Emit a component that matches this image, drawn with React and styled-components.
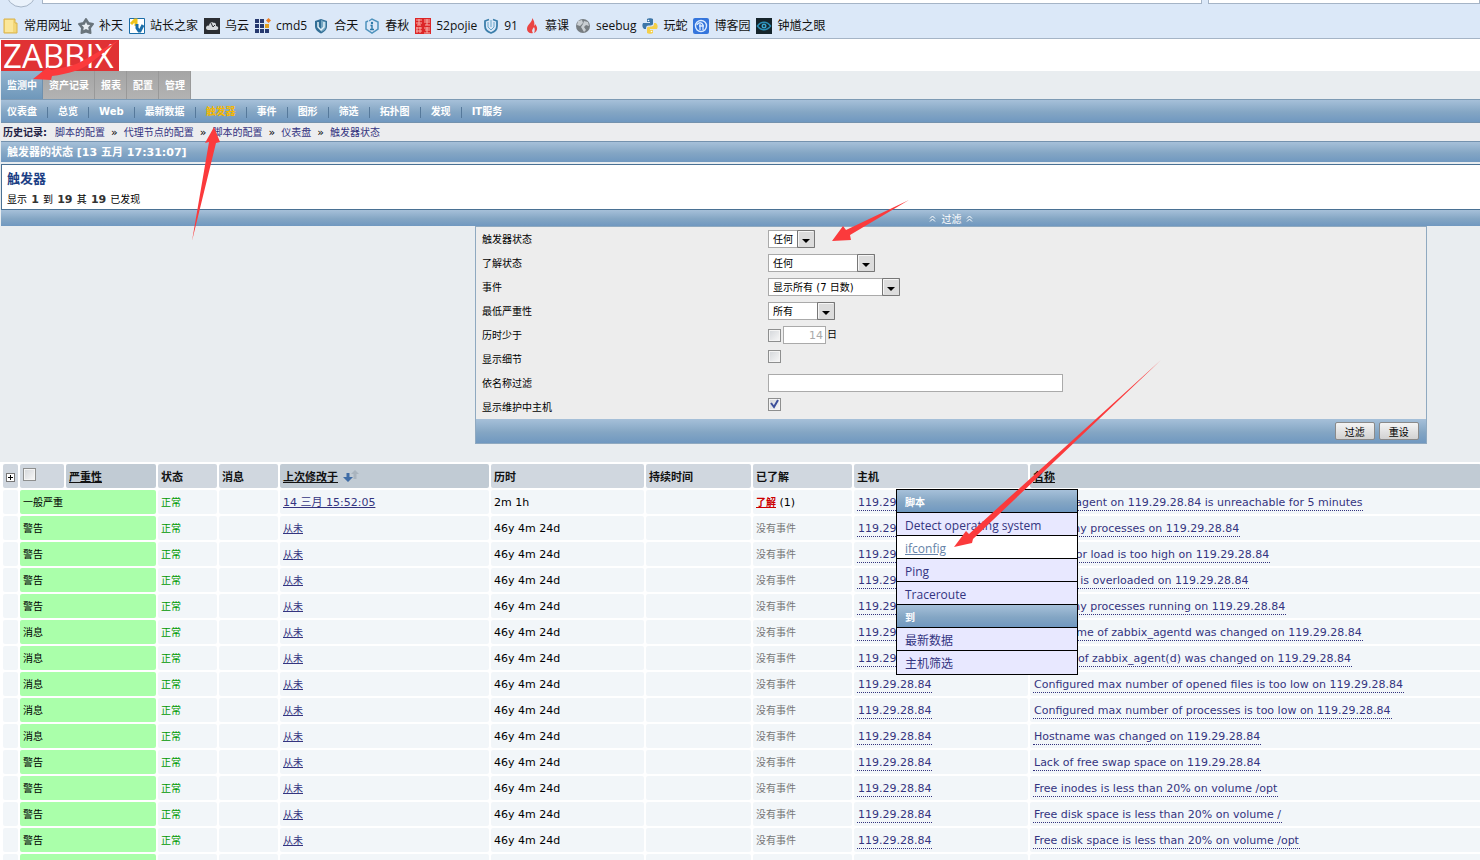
import React, { useState } from "react";
import styled, { createGlobalStyle, css } from "styled-components";

const GlobalStyle = createGlobalStyle`
  * {
    box-sizing: border-box;
  }
  body {
    margin: 0;
    background: #e9edf0;
    color: #000;
    font-family: "DejaVu Sans", "Noto Sans CJK SC", sans-serif;
    font-size: 10px;
    line-height: 16px;
  }
  button, input, select {
    font-family: inherit;
    font-size: 10px;
    margin: 0;
  }
  a {
    color: #34347f;
    text-decoration: none;
  }
`;

const blueBar = css`
  background: linear-gradient(#a6c0d9, #84a6c4 55%, #7098c0);
`;

const Screen = styled.div`
  position: relative;
  height: 100vh;
  overflow: hidden;
`;

/* browser bar */

const Browser = styled.header`
  background: #dbe8f8;
  border-bottom: 1px solid #a5b4c6;
  height: 39px;
`;

const AddressRow = styled.div`
  display: flex;
  gap: 6px;
  height: 4px;
`;

const BackCircle = styled.svg`
  width: 36px;
  height: 9px;
  flex: none;
`;

const Field = styled.div`
  background: #fff;
  border: 1px solid #a5b4c6;
  border-top: 0;
  flex: ${props => props.grow};
`;

const Bookmarks = styled.nav`
  display: flex;
  gap: 6px;
  padding: 14px 3px 0;
  height: 30px;
`;

const Bookmark = styled.a`
  display: flex;
  gap: 5px;
  align-items: center;
  height: 16px;
  color: #111;
  font: 12px/16px "Open Sans", "Noto Sans CJK SC", sans-serif;
  white-space: nowrap;

  svg {
    width: 16px;
    height: 16px;
    flex: none;
  }
`;

/* zabbix header */

const LogoRow = styled.div`
  background: #fff;
  height: 32px;
  padding: 1px 1px 0;
`;

const Logo = styled.div`
  background: #e03234;
  color: #fff;
  width: 118px;
  height: 31px;
  padding-left: 2px;
  font: 33px/32px "Open Sans", sans-serif;
`;

const Tabs = styled.div`
  display: flex;
  padding-left: 1px;
  height: 28px;
`;

const Tab = styled.a`
  color: #fff;
  font-weight: bold;
  line-height: 30px;
  padding: 0 5px 0 6px;
  border-right: 1px solid ${props => (props.$active ? "#6e90ae" : "#999")};
  background: ${props =>
    props.$active
      ? "linear-gradient(#93b3cd, #6f98bb)"
      : "linear-gradient(#a5a5a5, #b3b3b3)"};
`;

const SubMenu = styled.nav`
  ${blueBar}
  display: flex;
  align-items: center;
  gap: 10px;
  height: 24px;
  padding: 2px 0 0 6px;
  margin-left: 1px;
  border-top: 1px solid #7d9ab4;
  border-bottom: 1px solid #7492ae;
`;

const SubLink = styled.a`
  color: ${props => (props.$active ? "#f5b800" : "#fff")};
  font-weight: bold;
`;

const Divider = styled.span`
  width: 1px;
  height: 11px;
  background: #56799b;
`;

const History = styled.div`
  display: flex;
  gap: 6px;
  height: 18px;
  line-height: 20px;
  padding-left: 3px;
  background: #ecedef;

  b {
    margin-right: 2px;
    color: #222244;
  }
  span {
    font-size: 11px;
  }
`;

const TitleBar = styled.h1`
  ${blueBar}
  margin: 0 0 2px 1px;
  height: 21px;
  padding-left: 6px;
  border-top: 1px solid #7492ae;
  color: #fff;
  font-size: 11px;
  line-height: 22px;
`;

const Summary = styled.section`
  margin-left: 1px;
  height: 46px;
  padding: 5px 5px 0;
  background: #fff;
  border: 1px solid #4a7194;
  border-right: 0;

  h2 {
    margin: 0 0 4px;
    color: #1d3f85;
    font-size: 13px;
    line-height: 18px;
  }
  p {
    margin: 0;
    font-size: 10px;
  }
  b {
    margin: 0 1px;
    font-size: 11px;
    color: #333;
  }
`;

/* filter */

const FilterToggle = styled.div`
  ${blueBar}
  height: 16px;
  margin-left: 1px;
  padding: 0 3.6% 0 32.1%;
  text-align: center;

  button {
    display: inline-flex;
    align-items: center;
    gap: 5px;
    height: 16px;
    padding: 0;
    border: 0;
    background: none;
    color: #fff;
  }
`;

const FilterArea = styled.div`
  padding: 0 3.6% 0 32.1%;
  margin-bottom: 18px;
`;

const Filter = styled.form`
  background: #ededed;
  border: 1px solid #8fa9c0;
`;

const FilterRow = styled.div`
  display: flex;
  align-items: center;
  height: 24px;
  padding-left: 6px;

  > label:first-child {
    width: 286px;
    flex: none;
    padding-top: 2px;
  }
  > :last-child {
    margin-bottom: ${props => (props.$raised ? 6 : 0)}px;
  }
`;

const FilterFooter = styled.div`
  ${blueBar}
  display: flex;
  justify-content: flex-end;
  align-items: center;
  gap: 4px;
  height: 24px;
  padding-right: 7px;

  button {
    width: 40px;
    height: 18px;
    padding: 0;
    border: 1px solid #8a8a8a;
    border-radius: 2px;
    background: linear-gradient(#f4f4f4, #d2d2d2);
  }
`;

const SelectBox = styled.span`
  position: relative;
  width: ${props => props.$width}px;
  height: 18px;

  select {
    appearance: none;
    display: block;
    width: 100%;
    height: 18px;
    padding: 0 18px 0 4px;
    border: 1px solid #aaa;
    border-radius: 0;
    background: #fff;
    color: #000;
  }
  svg {
    position: absolute;
    top: 0;
    right: 0;
    width: 18px;
    height: 18px;
    pointer-events: none;
  }
`;

const Check = styled.input`
  appearance: none;
  display: block;
  width: 13px;
  height: 13px;
  flex: none;
  border: 1px solid #8e8f8f;
  background: linear-gradient(135deg, #d3d6da, #f8f8f8);
  box-shadow: inset 0 0 0 1px #f4f4f4;
`;

const CheckWrap = styled.span`
  position: relative;

  svg {
    position: absolute;
    top: 1px;
    left: 2px;
    width: 10px;
    height: 10px;
    pointer-events: none;
  }
`;

const TextInput = styled.input`
  height: 18px;
  width: ${props => props.$width}px;
  padding: 0 2px;
  border: 1px solid #aaa;
  background: #fff;
  font-size: 11px;

  &:disabled {
    margin: 0 1px 0 2px;
    color: #aaa;
    text-align: right;
  }
`;

/* triggers table */

const Table = styled.table`
  table-layout: fixed;
  width: calc(100% + 3px);
  border-collapse: separate;
  border-spacing: 2px;
  background: #fff;
  border-left: 1px solid #fff;

  th, td {
    height: 24px;
    padding: 1px 3px 0;
    text-align: left;
    white-space: nowrap;
    border-radius: 2px;
    font-size: 11px;
  }
  th {
    padding-top: 3px;
    color: #111;
    background: #d0d7df;
  }
  td {
    background: #f2f6f9;
  }
  th input {
    margin-bottom: 7px;
  }
`;

const SortHead = styled.th`
  && {
    background: #c1cbd4;
  }
  a {
    color: #111;
    text-decoration: underline;
  }
  svg {
    width: 18px;
    height: 14px;
    margin-left: 4px;
    vertical-align: -2px;
  }
`;

const ExpandButton = styled.button`
  display: block;
  width: 9px;
  height: 9px;
  padding: 0;
  border: 1px solid #777;
  background: #fff;

  svg {
    display: block;
    width: 7px;
    height: 7px;
  }
`;

const Severity = styled.td`
  && {
    font-size: 10px;
    background: #aaffaa;
  }
`;

const Status = styled.td`
  && {
    font-size: 10px;
    color: #009900;
  }
`;

const TimeLink = styled.a`
  font-size: ${props => (props.$never ? 10 : 11)}px;
  text-decoration: underline;
`;

const AckCell = styled.td`
  a {
    color: #cc0000;
    font-size: 10px;
    font-weight: bold;
    text-decoration: underline;
  }
  span {
    color: #777;
    font-size: 10px;
  }
`;

const HostCell = styled.td`
  position: relative;
`;

const DottedLink = styled.a`
  display: inline-block;
  line-height: 14px;
  padding: 0 1px;
  border-bottom: 1px dotted #34347f;
`;

const HostMenu = styled.div`
  position: absolute;
  z-index: 1;
  top: -1px;
  left: 42px;
  width: 182px;
  border: 1px solid #000;
  background: #e8e8ff;
`;

const MenuTitle = styled.div`
  ${blueBar}
  height: 23px;
  padding-left: 8px;
  border-bottom: 1px solid #000;
  color: #fff;
  font-size: 10px;
  font-weight: bold;
  line-height: 26px;
`;

const MenuLink = styled.a`
  display: block;
  height: 23px;
  padding-left: 8px;
  border-bottom: 1px solid #000;
  font: 12px/26px "Open Sans", "Noto Sans CJK SC", sans-serif;

  &:last-child {
    border-bottom: 0;
  }
  ${props =>
    props.$hover &&
    css`
      background: #fff;
      color: #6683a8;
      text-decoration: underline;
    `}
`;

const Pointers = styled.svg`
  position: absolute;
  z-index: 2;
  top: 0;
  left: 0;
  width: 1480px;
  height: 860px;
  pointer-events: none;
`;

const shield = "M8 1 14 3V8C14 12 11 14 8 15.500C5 14 2 12 2 8V3Z";

const bookmarks = [
  {
    name: "常用网址",
    icon: (
      <>
        <path d="M1 1h11v4h2v10H1z" fill="#f3d778" stroke="#d9b24a" />
        <path d="M2 2h8v12H2z" fill="#fbe79a" />
      </>
    )
  },
  {
    name: "补天",
    icon: (
      <>
        <path
          d="M8 1 10.500 5 15 6 12 10 12.500 15 8 13.500 3.500 15 4 10 1 6 5.500 5Z"
          fill="#69747c"
          stroke="#69747c"
          strokeWidth="2"
          strokeLinejoin="round"
        />
        <path
          d="M8 4 9.300 6.700 12.300 7.100 10.200 9.300 10.700 12.300 8 11 5.300 12.300 5.800 9.300 3.700 7.100 6.700 6.700Z"
          fill="#e8eef4"
        />
      </>
    )
  },
  {
    name: "站长之家",
    icon: (
      <>
        <path d="M.5.5h15v15H.5z" fill="#fff" stroke="#1b6da8" />
        <path d="M2 6 6 2h1v6" fill="none" stroke="#f0c419" strokeWidth="3" />
        <path d="M8 6v4l2 3h1l3-6" fill="none" stroke="#1b6da8" strokeWidth="3" />
      </>
    )
  },
  {
    name: "乌云",
    icon: (
      <>
        <path d="M0 0h16v16H0z" fill="#2b2e33" />
        <path d="M2 10c0-2 2-3 3-2 0-3 3-5 5-3 2-1 2 2 2 3 3 0 3 4 0 4H4c-1 0-2-1-2-2z" fill="#d5d9dc" />
        <path d="m7 5 2 4 2-2" fill="none" stroke="#2b2e33" />
      </>
    )
  },
  {
    name: "cmd5",
    icon: (
      <>
        <path d="M0 1h4v4H0zM5 1h4v4H5zM0 6h4v4H0zM5 6h4v4H5zM0 11h4v4H0zM5 11h4v4H5zM10 11h4v4h-4z" fill="#26396f" />
        <path d="M10 6h4v4h-4z" fill="#e0a020" />
        <path d="m13.500 0 2.500 2.500L13.500 5 11 2.500z" fill="#ed7d22" />
      </>
    )
  },
  {
    name: "合天",
    icon: (
      <>
        <path d={shield} fill="#326f96" />
        <path d="M8 2 13 4v4c0 3-2 5-5 6z" fill="#75a7c2" />
        <path d="M5 4v5l3 3 3-3V4" fill="none" stroke="#e5f3fa" strokeWidth="1.500" />
      </>
    )
  },
  {
    name: "春秋",
    icon: (
      <>
        <path d="M4 3 2 4v7l6 4 6-4V4L8 1 5 3" fill="none" stroke="#4f93bd" strokeWidth="1.500" />
        <circle cx="8" cy="5" r="1.200" fill="#2b78a8" />
        <path d="M6.500 7.500H8v4M6 11.500h4" fill="none" stroke="#2b78a8" strokeWidth="1.400" />
      </>
    )
  },
  {
    name: "52pojie",
    icon: (
      <>
        <path d="M0 0h16v16H0z" fill="#dc2527" />
        <path
          d="M1 2h6M4 1v6M1 5h6M2 7h4M9 2h6M12 1v6M9 4h6M10 7h5M1 10h6M2 9v6M5 9v6M1 13h6M9 10h6M10 12h5M12 9v6M9 15h6"
          stroke="#f7b0aa"
          fill="none"
        />
      </>
    )
  },
  {
    name: "91",
    icon: (
      <>
        <path d="M6 1.500 2 3v5c0 4 3 6 6 7 3-1 6-3 6-7V3l-4-1.500" fill="none" stroke="#3b7eaa" strokeWidth="1.800" />
        <path d="M8 2v7M5 4v5l3 3 3-3V4" fill="none" stroke="#68a6c8" />
      </>
    )
  },
  {
    name: "慕课",
    icon: (
      <>
        <path d="M8 0c1 4-5 6-5 11 0 3 3 5 6 4-2-3 0-4 1-6 1 2 1 4 0 6 4-2 4-6 1-9 0 1-1 2-1 2 1-3 0-6-2-8z" fill="#ea4543" />
      </>
    )
  },
  {
    name: "seebug",
    icon: (
      <>
        <circle cx="8" cy="8" r="7" fill="#777d81" />
        <path d="m3 3 4-1 1 3-3 3-3-1zM9 3l4 1 1 4-3-1-2 2 2 3-2 2-3-5 2-3z" fill="#c9ced2" />
      </>
    )
  },
  {
    name: "玩蛇",
    icon: (
      <>
        <path d="M5 1c1-1 5-1 6 0v5c0 2-5 1-6 2-1 0-1 3-1 3H2C0 9 0 7 1 5h7V4H5z" fill="#3d76a8" />
        <path d="M11 15c-1 1-5 1-6 0v-5c0-2 5-1 6-2 1 0 1-3 1-3h2c2 2 2 4 1 6H8v1h3z" fill="#f4cf4a" />
        <circle cx="6.500" cy="2.500" r=".8" fill="#fff" />
        <circle cx="9.500" cy="13.500" r=".8" fill="#fff" />
      </>
    )
  },
  {
    name: "博客园",
    icon: (
      <>
        <rect width="16" height="16" rx="2" fill="#3475dc" />
        <circle cx="8" cy="8" r="5.500" fill="none" stroke="#dcecff" strokeWidth="1.400" />
        <path d="M4 7c1-3 5-3 6 0v5M7 6v6M6 8h5" fill="none" stroke="#dcecff" strokeWidth="1.300" />
      </>
    )
  },
  {
    name: "钟馗之眼",
    icon: (
      <>
        <path d="M0 0h16v16H0z" fill="#15242b" />
        <path d="M1.500 8C5 3 11 3 14.500 8 11 13 5 13 1.500 8z" fill="none" stroke="#2b8db5" strokeWidth="1.500" />
        <circle cx="8" cy="8" r="2.500" fill="#39a5cf" />
        <circle cx="8" cy="8" r="1" fill="#15242b" />
      </>
    )
  }
];

const tabs = ["监测中", "资产记录", "报表", "配置", "管理"];
const subLinks = ["仪表盘", "总览", "Web", "最新数据", "触发器", "事件", "图形", "筛选", "拓扑图", "发现", "IT服务"];
const visited = ["脚本的配置", "代理节点的配置", "脚本的配置", "仪表盘", "触发器状态"];

const host = "119.29.28.84";

const triggers = [
  ["一般严重", `Zabbix agent on ${host} is unreachable for 5 minutes`],
  ["警告", `Too many processes on ${host}`],
  ["警告", `Processor load is too high on ${host}`],
  ["警告", `Disk I/O is overloaded on ${host}`],
  ["警告", `Too many processes running on ${host}`],
  ["消息", `Host name of zabbix_agentd was changed on ${host}`],
  ["消息", `Version of zabbix_agent(d) was changed on ${host}`],
  ["消息", `Configured max number of opened files is too low on ${host}`],
  ["消息", `Configured max number of processes is too low on ${host}`],
  ["消息", `Hostname was changed on ${host}`],
  ["警告", `Lack of free swap space on ${host}`],
  ["警告", "Free inodes is less than 20% on volume /opt"],
  ["警告", "Free disk space is less than 20% on volume /"],
  ["警告", "Free disk space is less than 20% on volume /opt"],
  ["警告", "Free inodes is less than 20% on volume /"]
];

const columns = [15, 44, 90, 59, 59, 209, 153, 105, 99, 174];

const Select = ({ id, width, options }) => (
  <SelectBox $width={width}>
    <select id={id}>
      {options.map(option => (
        <option key={option}>{option}</option>
      ))}
    </select>
    <svg viewBox="0 0 18 18">
      <path d="M.5.5h17v17H.5z" fill="#dcdcdc" stroke="#777" />
      <path d="M1.500 16V1.500H16" fill="none" stroke="#f6f6f6" />
      <path d="M5 9h8l-4 4z" fill="#000" />
    </svg>
  </SelectBox>
);

const ScriptMenu = () => (
  <HostMenu>
    <MenuTitle>脚本</MenuTitle>
    <MenuLink href="#detect">Detect operating system</MenuLink>
    <MenuLink href="#ifconfig" $hover>
      ifconfig
    </MenuLink>
    <MenuLink href="#ping">Ping</MenuLink>
    <MenuLink href="#traceroute">Traceroute</MenuLink>
    <MenuTitle>到</MenuTitle>
    <MenuLink href="#latest">最新数据</MenuLink>
    <MenuLink href="#screens">主机筛选</MenuLink>
  </HostMenu>
);

const Chevrons = () => (
  <svg width="7" height="7" viewBox="0 0 7 7" fill="none" stroke="#fff">
    <path d="m1 3.500 2.500-2.500L6 3.500M1 6.500 3.500 4 6 6.500" />
  </svg>
);

const App = () => {
  const [maintenance, setMaintenance] = useState(true);

  return (
    <Screen>
      <GlobalStyle />
      <Browser>
        <AddressRow>
          <BackCircle viewBox="0 0 36 9">
            <circle cx="21" cy="-8" r="15" fill="#eaf2fb" stroke="#a5b4c6" />
          </BackCircle>
          <Field grow={1166} />
          <Field grow={272} />
        </AddressRow>
        <Bookmarks>
          {bookmarks.map(item => (
            <Bookmark key={item.name} href="#bookmark">
              <svg viewBox="0 0 16 16">{item.icon}</svg>
              {item.name}
            </Bookmark>
          ))}
        </Bookmarks>
      </Browser>

      <LogoRow>
        <Logo>ZABBIX</Logo>
      </LogoRow>
      <Tabs>
        {tabs.map((tab, i) => (
          <Tab key={tab} href="#tab" $active={i === 0}>
            {tab}
          </Tab>
        ))}
      </Tabs>
      <SubMenu>
        {subLinks.map((link, i) => (
          <React.Fragment key={link}>
            {i > 0 && <Divider />}
            <SubLink href="#page" $active={link === "触发器"}>
              {link}
            </SubLink>
          </React.Fragment>
        ))}
      </SubMenu>
      <History>
        <b>历史记录:</b>
        {visited.map((page, i) => (
          <React.Fragment key={i}>
            {i > 0 && <span>»</span>}
            <a href="#history">{page}</a>
          </React.Fragment>
        ))}
      </History>

      <TitleBar>触发器的状态 [13 五月 17:31:07]</TitleBar>
      <Summary>
        <h2>触发器</h2>
        <p>
          显示 <b>1</b> 到 <b>19</b> 其 <b>19</b> 已发现
        </p>
      </Summary>
      <FilterToggle>
        <button type="button">
          <Chevrons />
          过滤
          <Chevrons />
        </button>
      </FilterToggle>

      <FilterArea>
        <Filter onSubmit={e => e.preventDefault()}>
          <FilterRow>
            <label htmlFor="status">触发器状态</label>
            <Select id="status" width={47} options={["任何"]} />
          </FilterRow>
          <FilterRow>
            <label htmlFor="ack">了解状态</label>
            <Select id="ack" width={107} options={["任何"]} />
          </FilterRow>
          <FilterRow>
            <label htmlFor="events">事件</label>
            <Select id="events" width={132} options={["显示所有 (7 日数)"]} />
          </FilterRow>
          <FilterRow>
            <label htmlFor="severity">最低严重性</label>
            <Select id="severity" width={67} options={["所有"]} />
          </FilterRow>
          <FilterRow>
            <label htmlFor="age">历时少于</label>
            <Check type="checkbox" id="age" />
            <TextInput id="days" $width={43} defaultValue="14" disabled />
            <label htmlFor="days">日</label>
          </FilterRow>
          <FilterRow $raised>
            <label htmlFor="details">显示细节</label>
            <Check type="checkbox" id="details" />
          </FilterRow>
          <FilterRow>
            <label htmlFor="name">依名称过滤</label>
            <TextInput id="name" $width={295} />
          </FilterRow>
          <FilterRow $raised>
            <label htmlFor="maintenance">显示维护中主机</label>
            <CheckWrap>
              <Check
                type="checkbox"
                id="maintenance"
                checked={maintenance}
                onChange={e => setMaintenance(e.target.checked)}
              />
              {maintenance && (
                <svg viewBox="0 0 10 10">
                  <path d="m1 4 3 4 4-7" fill="none" stroke="#3c4f9a" strokeWidth="2" />
                </svg>
              )}
            </CheckWrap>
          </FilterRow>
          <FilterFooter>
            <button type="submit">过滤</button>
            <button type="reset">重设</button>
          </FilterFooter>
        </Filter>
      </FilterArea>

      <Table>
        <colgroup>
          {columns.map((width, i) => (
            <col key={i} style={{ width }} />
          ))}
          <col />
        </colgroup>
        <thead>
          <tr>
            <th>
              <ExpandButton type="button" aria-label="展开">
                <svg viewBox="0 0 7 7">
                  <path d="M1 3.500h5M3.500 1v5" stroke="#000" />
                </svg>
              </ExpandButton>
            </th>
            <th>
              <Check type="checkbox" aria-label="全选" />
            </th>
            <SortHead>
              <a href="#sort">严重性</a>
            </SortHead>
            <th>状态</th>
            <th>消息</th>
            <SortHead>
              <a href="#sort">上次修改于</a>
              <svg viewBox="0 0 18 14">
                <path d="M13 1 17 5h-2.500v5h-3V5H9z" fill="#a9b4be" />
                <path d="M4.500 4h3v4H11l-5 5-5-5h3.500z" fill="#3f6ca6" />
              </svg>
            </SortHead>
            <th>历时</th>
            <th>持续时间</th>
            <th>已了解</th>
            <th>主机</th>
            <SortHead>
              <a href="#sort">名称</a>
            </SortHead>
          </tr>
        </thead>
        <tbody>
          {triggers.map(([severity, name], i) => (
            <tr key={i}>
              <td />
              <Severity colSpan={2}>{severity}</Severity>
              <Status>正常</Status>
              <td />
              <td>
                <TimeLink href="#events" $never={i > 0}>
                  {i > 0 ? "从未" : "14 三月 15:52:05"}
                </TimeLink>
              </td>
              <td>{i > 0 ? "46y 4m 24d" : "2m 1h"}</td>
              <td />
              <AckCell>
                {i > 0 ? (
                  <span>没有事件</span>
                ) : (
                  <>
                    <a href="#ack">了解</a> (1)
                  </>
                )}
              </AckCell>
              <HostCell>
                <DottedLink href="#host">{host}</DottedLink>
                {i === 0 && <ScriptMenu />}
              </HostCell>
              <td>
                <DottedLink href="#trigger">{name}</DottedLink>
              </td>
            </tr>
          ))}
        </tbody>
      </Table>

      <Pointers viewBox="0 0 1480 860" fill="#fb3a3c">
        <path d="M33 79 48 67 51 70C66 67 74 66 84 60L119 40 92 62C82 70 68 74 52 76L51 80Z" />
        <path d="M214 127 205 143 209 142 192 241 216 143 220 142Z" />
        <path d="M832 241 843 226 846 230 909 200 850 235 851 240Z" />
        <path d="M954 547 966 531 969 534 1161 360 973 539 972 543Z" />
      </Pointers>
    </Screen>
  );
};

export default App;
